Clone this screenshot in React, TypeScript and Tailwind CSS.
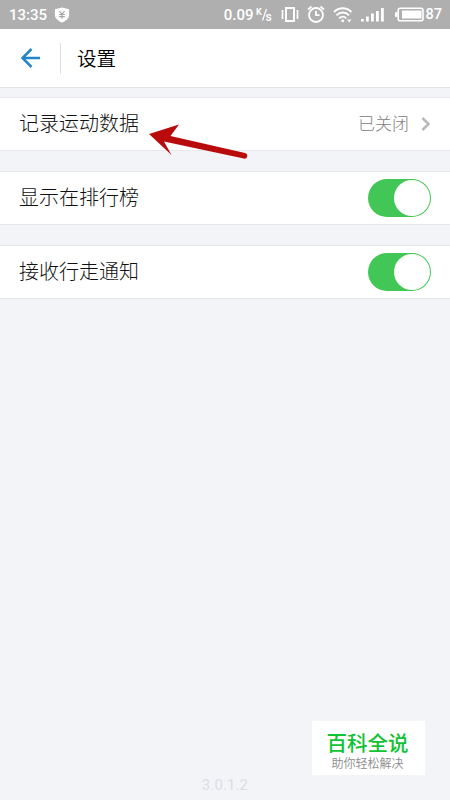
import React, { useState } from 'react';

interface ToggleProps {
  checked: boolean;
  onChange: (checked: boolean) => void;
  label: string;
}

function StatusBar() {
  return (
    <div className="flex h-[29px] items-center bg-[#afafaf] pl-[9px] pr-[8px] text-white font-['Roboto','Noto_Sans_CJK_SC',sans-serif]">
      <span className="w-[38px] pt-px text-[15px] font-medium leading-none whitespace-nowrap">13:35</span>
      <svg className="ml-[7px] h-[16px] w-[16px]" viewBox="0 0 16 17">
        <path d="M8 .5 15.500 2.500v6c0 3.700-3.500 6.300-7.500 8-4-1.700-7.500-4.300-7.500-8v-6Z" fill="#fff" />
        <path d="m5.300 4.500 2.700 3 2.700-3M5 8h6M5 10.200h6M8 7.500v5" fill="none" stroke="#a3a3a3" strokeWidth="1.200" />
      </svg>

      <span className="ml-auto pt-px text-[15px] font-medium leading-none">0.09</span>
      <svg className="ml-[2px] h-[16px] w-[17px]" viewBox="0 0 17 16" fill="#fff">
        <text x="0" y="7.500" fontSize="9" fontWeight="700">K</text>
        <path d="M10.500 2 6.500 13.500" stroke="#fff" strokeWidth="1.200" />
        <text x="9.500" y="14" fontSize="12" fontWeight="500">s</text>
      </svg>

      {/* vibrate */}
      <svg className="ml-[8px] h-[18px] w-[18px]" viewBox="0 0 18 18" fill="none" stroke="#fff">
        <rect x="5" y="2" width="8" height="13" strokeWidth="2" />
        <path d="M1.500 4v9M16.500 4v9" strokeWidth="1.700" />
      </svg>

      {/* alarm */}
      <svg className="ml-[8px] h-[18px] w-[18px]" viewBox="0 0 18 18" fill="none" stroke="#fff" strokeWidth="1.800">
        <circle cx="9" cy="9" r="7" />
        <path d="M9 5v4.200h3.500M1 3.500l3.500-3M17 3.500l-3.500-3" />
      </svg>

      {/* wifi */}
      <svg className="ml-[8px] h-[16px] w-[20px]" viewBox="0 0 20 16" fill="none" stroke="#fff" strokeWidth="1.900">
        <path d="M1 5c5-5 12.500-5 17.500 0M3.500 8.300c3.700-3.700 9-3.700 12.500 0M6.200 11.300c2.200-2.200 5-2.200 7 0" />
        <circle cx="9.700" cy="13.700" r="1.500" fill="#fff" stroke="none" />
        <path d="M14 12.500h4.500l-2.250 3Z" fill="#fff" stroke="none" />
      </svg>

      {/* signal */}
      <svg className="ml-[8px] h-[16px] w-[24px]" viewBox="0 0 24 16" fill="#fff">
        <rect x="0" y="12" width="2.800" height="2.500" />
        <rect x="5" y="9.500" width="2.800" height="5" />
        <rect x="10" y="6.500" width="2.800" height="8" />
        <rect x="15" y="4" width="2.800" height="10.500" />
        <rect x="20" y="1" width="2.800" height="13.500" />
      </svg>

      {/* battery */}
      <svg className="ml-[10px] h-[16px] w-[29px]" viewBox="0 0 29 16">
        <rect x="3.200" y="1.200" width="24.800" height="12.600" rx="2" fill="none" stroke="#fff" strokeWidth="1.600" />
        <rect x="7" y="3.500" width="19.500" height="8" fill="#fff" />
        <rect x="0" y="5" width="2.500" height="5" rx="1" fill="#fff" />
      </svg>
      <span className="ml-[2px] pt-px text-[14.5px] font-medium leading-none">87</span>
    </div>
  );
}

function Toggle({ checked, onChange, label }: ToggleProps) {
  return (
    <button
      role="switch"
      aria-checked={checked}
      aria-label={label}
      onClick={() => onChange(!checked)}
      className={`flex h-[38px] w-[63px] items-center rounded-full p-px ${checked ? 'justify-end bg-[#42c655]' : 'justify-start bg-zinc-300'}`}
    >
      <span className="size-[36px] rounded-full bg-white" />
    </button>
  );
}

function Row({ label, children }: { label: string; children: React.ReactNode }) {
  return (
    <div className="flex h-[54px] items-center justify-between border-y border-[#e6e7ea] bg-white pl-[19px] pr-[19px]">
      <span className="pb-[2px] text-[20px] font-light leading-none text-[#111]">{label}</span>
      {children}
    </div>
  );
}

export default function App() {
  const [ranking, setRanking] = useState(true);
  const [notify, setNotify] = useState(true);

  return (
    <div className="relative flex h-[800px] w-[450px] flex-col overflow-hidden bg-[#f3f4f8] font-['Noto_Sans_CJK_SC',sans-serif]">
      <StatusBar />

      <header className="flex h-[59px] items-center border-b border-[#e2e3e6] bg-white pl-[20px]">
        <button aria-label="返回">
          <svg className="h-[20px] w-[21px]" viewBox="0 0 21 20" fill="none" stroke="#2585c9" strokeWidth="2.500">
            <path d="M11.500 1 2.500 10l9 9M2.500 10H20" />
          </svg>
        </button>
        <span className="ml-[19px] h-[31px] w-px bg-[#dedede]" />
        <h1 className="ml-[16px] text-[19.5px] font-[350] leading-none text-black">设置</h1>
      </header>

      <main className="mt-[9px] flex flex-col gap-[20px]">
        <Row label="记录运动数据">
          <div className="flex items-center">
            <span className="pb-[3px] text-[17px] font-light leading-none text-[#808080]">已关闭</span>
            <svg className="ml-[12px] h-[14px] w-[10px]" viewBox="0 0 10 14" fill="none" stroke="#b9b9b9" strokeWidth="2.500">
              <path d="m1.500 1 6 6-6 6" />
            </svg>
          </div>
        </Row>
        <Row label="显示在排行榜">
          <Toggle checked={ranking} onChange={setRanking} label="显示在排行榜" />
        </Row>
        <Row label="接收行走通知">
          <Toggle checked={notify} onChange={setNotify} label="接收行走通知" />
        </Row>
      </main>

      <footer className="mt-auto flex h-[30px] justify-center font-['Roboto',sans-serif] text-[15px] leading-[30px] text-[#dcdde2]">
        <span className="tracking-[0.1px]">3.0.1.2</span>
      </footer>

      {/* pointer drawn over the first row */}
      <svg className="pointer-events-none absolute left-[148px] top-[122px] h-[38px] w-[102px]" viewBox="0 0 102 38">
        <path d="M1 12 31 2.500 22.500 14 97 31a2.800 2.800 0 0 1-1.200 5.600L16 19.500l7.500 13.500Z" fill="#b90a0c" />
      </svg>

      <div className="absolute left-[312px] top-[721px] flex h-[54px] w-[113px] flex-col items-center bg-white">
        <span className="mt-[10px] -translate-x-px text-[20.5px] font-medium leading-[22px] text-[#10c234]">百科全说</span>
        <span className="mt-[3px] -translate-x-px text-[12px] font-[350] leading-[14px] text-[#8c8c8c]">助你轻松解决</span>
      </div>
    </div>
  );
}
